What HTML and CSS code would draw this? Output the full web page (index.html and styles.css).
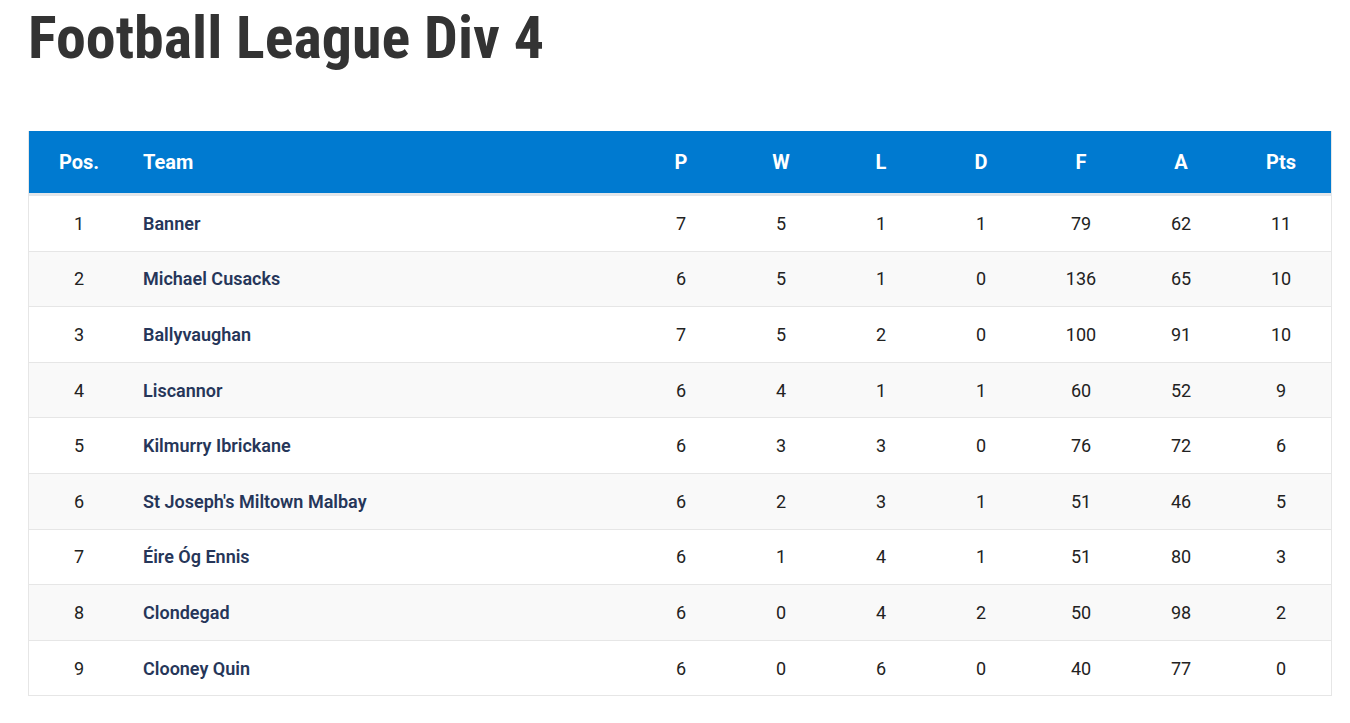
FILE: index.html
```html
<!DOCTYPE html>
<html lang="en">

<head>
	<meta charset="UTF-8" />
	<title>Football League Div 4</title>
	<link rel="stylesheet" href="styles.css">
</head>

<body>
	<h1 class="title">Football League Div 4</h1>

	<table class="league">
		<thead>
			<tr>
				<th class="pos">Pos.</th>
				<th class="team">Team</th>
				<th class="num">P</th>
				<th class="num">W</th>
				<th class="num">L</th>
				<th class="num">D</th>
				<th class="num">F</th>
				<th class="num">A</th>
				<th class="num">Pts</th>
			</tr>
		</thead>
		<tbody>
			<tr><td class="pos">1</td><td class="team">Banner</td><td>7</td><td>5</td><td>1</td><td>1</td><td>79</td><td>62</td><td>11</td></tr>
			<tr><td class="pos">2</td><td class="team">Michael Cusacks</td><td>6</td><td>5</td><td>1</td><td>0</td><td>136</td><td>65</td><td>10</td></tr>
			<tr><td class="pos">3</td><td class="team">Ballyvaughan</td><td>7</td><td>5</td><td>2</td><td>0</td><td>100</td><td>91</td><td>10</td></tr>
			<tr><td class="pos">4</td><td class="team">Liscannor</td><td>6</td><td>4</td><td>1</td><td>1</td><td>60</td><td>52</td><td>9</td></tr>
			<tr><td class="pos">5</td><td class="team">Kilmurry Ibrickane</td><td>6</td><td>3</td><td>3</td><td>0</td><td>76</td><td>72</td><td>6</td></tr>
			<tr><td class="pos">6</td><td class="team">St Joseph's Miltown Malbay</td><td>6</td><td>2</td><td>3</td><td>1</td><td>51</td><td>46</td><td>5</td></tr>
			<tr><td class="pos">7</td><td class="team">Éire Óg Ennis</td><td>6</td><td>1</td><td>4</td><td>1</td><td>51</td><td>80</td><td>3</td></tr>
			<tr><td class="pos">8</td><td class="team">Clondegad</td><td>6</td><td>0</td><td>4</td><td>2</td><td>50</td><td>98</td><td>2</td></tr>
			<tr><td class="pos">9</td><td class="team">Clooney Quin</td><td>6</td><td>0</td><td>6</td><td>0</td><td>40</td><td>77</td><td>0</td></tr>
		</tbody>
	</table>
</body>

</html>
```

FILE: styles.css
```css
body {
	font-family: Roboto, "Liberation Sans", sans-serif;
	background: white;
	color: #333;
	margin: 0;
	padding: 0 19px 0 28px;
}

.title {
	margin: 0;
	padding-top: 4px;
	height: 127px;
	font-size: 60px;
	font-weight: 700;
	font-stretch: condensed;
	line-height: 68px;
	color: #333;
	white-space: nowrap;
}

.league {
	width: 1304px;
	border-collapse: collapse;
	border: 1px solid #e6e6e6;
	border-top: 0;
}

.league thead tr {
	background: #007ad0;
	color: white;
}

.league th {
	height: 62px;
	padding: 0;
	font-size: 20px;
	font-weight: 700;
	text-align: center;
	border-bottom: 3px solid #e3e6ea;
}

.league th.num {
	width: 100px;
}

.league .pos {
	width: 100px;
}

.league .team {
	text-align: left;
	padding-left: 14px;
}

.league td {
	height: 54.6px;
	padding: 0;
	font-size: 18px;
	text-align: center;
	color: #222;
	border-bottom: 1px solid #e6e6e6;
}

.league td.team {
	font-weight: 600;
	color: #263659;
}

.league tbody tr:nth-child(even) {
	background: #f9f9f9;
}
```
